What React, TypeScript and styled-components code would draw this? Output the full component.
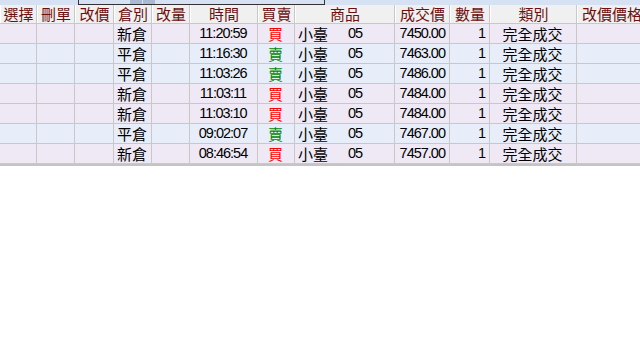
import React from "react";
import styled, { createGlobalStyle } from "styled-components";

const Global = createGlobalStyle`
  html, body { margin: 0; padding: 0; background: #ffffff; overflow: hidden; }
  body { width: 640px; height: 350px; }
`;

const COLS = "37px 38px 39px 38px 38px 68px 37px 100px 55px 40px 87px 70px";

const Page = styled.div`
  width: 640px;
  height: 350px;
  overflow: hidden;
  background: #ffffff;
`;

const TopStrip = styled.div`
  height: 5px;
  background: #d6e2f3;
  display: flex;
`;

const StripBox = styled.div`
  box-sizing: border-box;
  margin-left: 78px;
  width: 247px;
  height: 5px;
  border-left: 1px solid #333;
  border-right: 1px solid #333;
  border-bottom: 1px solid #333;
  background: #d6e2f3;
  display: flex;
  padding-left: 51px;
  gap: 1px;
`;

const StripSeg = styled.div`
  width: 12px;
  height: 4px;
  background: #a9b9d2;
`;

const Table = styled.div`
  width: 660px;
  display: flex;
  flex-direction: column;
  border-bottom: 2px solid #c4c4c4;
`;

const HeaderRow = styled.div`
  display: grid;
  grid-template-columns: ${COLS};
  height: 18px;
  background: #f0f0f0;
  border-bottom: 1px solid #c8c8c8;
`;

const HeadCell = styled.div`
  box-sizing: border-box;
  border-right: 1px solid #c8c8c8;
  border-left: 1px solid #ffffff;
  display: flex;
  align-items: center;
  justify-content: center;
  font-family: "Noto Sans CJK TC", sans-serif;
  font-size: 15px;
  line-height: 18px;
  color: #6e0e0e;
  white-space: nowrap;
`;

const Row = styled.div<{ $tone: "buy" | "sell" }>`
  display: grid;
  grid-template-columns: ${COLS};
  height: 20px;
  box-sizing: border-box;
  border-bottom: 1px solid #c8c8c8;
  background: ${(p) => (p.$tone === "buy" ? "#efe9f6" : "#e8eef9")};
`;

const Cell = styled.div<{ $align?: "left" | "center" | "right" }>`
  box-sizing: border-box;
  border-right: 1px solid #c8c8c8;
  display: flex;
  align-items: center;
  justify-content: ${(p) =>
    p.$align === "left" ? "flex-start" : p.$align === "right" ? "flex-end" : "center"};
  padding: 0 4px 0 3px;
  white-space: nowrap;
  color: #000;
`;

const Cjk = styled.span<{ $color?: string }>`
  font-family: "Noto Sans CJK TC", sans-serif;
  font-size: 15px;
  line-height: 19px;
  color: ${(p) => p.$color || "#000"};
`;

const Num = styled.span`
  font-family: "Liberation Sans", sans-serif;
  font-size: 14.5px;
  letter-spacing: -1px;
  line-height: 19px;
  color: #000;
`;

const Product = styled.div`
  display: flex;
  align-items: center;
  gap: 20px;
`;

type Trade = {
  pos: string;
  time: string;
  side: "買" | "賣";
  price: string;
};

const trades: Trade[] = [
  { pos: "新倉", time: "11:20:59", side: "買", price: "7450.00" },
  { pos: "平倉", time: "11:16:30", side: "賣", price: "7463.00" },
  { pos: "平倉", time: "11:03:26", side: "賣", price: "7486.00" },
  { pos: "新倉", time: "11:03:11", side: "買", price: "7484.00" },
  { pos: "新倉", time: "11:03:10", side: "買", price: "7484.00" },
  { pos: "平倉", time: "09:02:07", side: "賣", price: "7467.00" },
  { pos: "新倉", time: "08:46:54", side: "買", price: "7457.00" },
];

const headers = ["選擇", "刪單", "改價", "倉別", "改量", "時間", "買賣", "商品", "成交價", "數量", "類別", "改價價格"];

export default function App() {
  return (
    <Page>
      <Global />
      <TopStrip>
        <StripBox>
          <StripSeg />
          <StripSeg />
        </StripBox>
      </TopStrip>
      <Table>
        <HeaderRow>
          {headers.map((h) => (
            <HeadCell key={h}>{h}</HeadCell>
          ))}
        </HeaderRow>
        {trades.map((t, i) => (
          <Row key={i} $tone={t.side === "買" ? "buy" : "sell"}>
            <Cell />
            <Cell />
            <Cell />
            <Cell>
              <Cjk>{t.pos}</Cjk>
            </Cell>
            <Cell />
            <Cell>
              <Num>{t.time}</Num>
            </Cell>
            <Cell>
              <Cjk $color={t.side === "買" ? "#ff0000" : "#008a00"}>{t.side}</Cjk>
            </Cell>
            <Cell $align="left">
              <Product>
                <Cjk>小臺</Cjk>
                <Num>05</Num>
              </Product>
            </Cell>
            <Cell $align="right">
              <Num>{t.price}</Num>
            </Cell>
            <Cell $align="right">
              <Num>1</Num>
            </Cell>
            <Cell>
              <Cjk>完全成交</Cjk>
            </Cell>
            <Cell />
          </Row>
        ))}
      </Table>
    </Page>
  );
}
